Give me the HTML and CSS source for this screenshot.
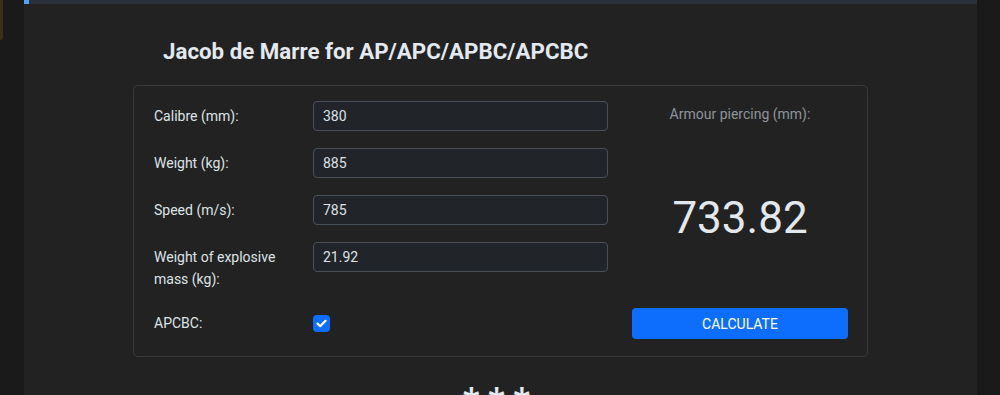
FILE: index.html
```html
<!DOCTYPE html>
<html lang="en">

<head>
	<meta charset="UTF-8">
	<title>Jacob de Marre</title>
	<link rel="stylesheet" href="styles.css">
</head>

<body>
	<div class="gutter gutter-left">
		<div class="tab"></div>
	</div>
	<div class="main">
		<div class="topbar"><span class="topbar-mark"></span></div>
		<h2 class="title">Jacob de Marre for AP/APC/APBC/APCBC</h2>
		<div class="card">
			<div class="form">
				<label class="label" for="calibre">Calibre (mm):</label>
				<input class="field" type="text" id="calibre" value="380">

				<label class="label" for="weight">Weight (kg):</label>
				<input class="field" type="text" id="weight" value="885">

				<label class="label" for="speed">Speed (m/s):</label>
				<input class="field" type="text" id="speed" value="785">

				<label class="label label-tall" for="explosive">Weight of explosive mass (kg):</label>
				<input class="field" type="text" id="explosive" value="21.92">

				<label class="label label-check" for="apcbc">APCBC:</label>
				<div class="check-cell">
					<span class="check">
						<svg width="11" height="9" viewBox="0 0 11 9">
							<path d="M1.5 4.6 L4.2 7.2 L9.5 1.8" fill="none" stroke="#fff" stroke-width="2.2" stroke-linecap="round" stroke-linejoin="round"/>
						</svg>
					</span>
				</div>
			</div>
			<div class="result">
				<div class="result-label">Armour piercing (mm):</div>
				<div class="result-value">733.82</div>
				<button type="button" class="calc">CALCULATE</button>
			</div>
		</div>
		<div class="stars">* * *</div>
	</div>
	<div class="gutter gutter-right"></div>
</body>

</html>
```

FILE: styles.css
```css
* {
    margin: 0;
    padding: 0;
    box-sizing: border-box;
    font-family: Roboto, "Liberation Sans", sans-serif;
}
body {
    display: flex;
    width: 1000px;
    height: 395px;
    overflow: hidden;
    background: #1a1a1a;
    color: #dee2e6;
}
.gutter-left {
    width: 24px;
    flex: none;
}
.gutter-right {
    width: 23px;
    flex: none;
}
.tab {
    width: 3px;
    height: 40px;
    background: #3a3117;
    border-bottom-right-radius: 3px;
}
.main {
    flex: 1;
    background: #222222;
    display: flex;
    flex-direction: column;
    align-items: center;
}
.topbar {
    width: 100%;
    height: 4px;
    background: #2b303b;
}
.topbar-mark {
    display: block;
    width: 5px;
    height: 4px;
    background: #4ea5f5;
}
.title {
    width: 735px;
    padding-left: 30px;
    margin-top: 35px;
    font-size: 22.3px;
    font-weight: 700;
    line-height: 25px;
    color: #e3e9ef;
}
.card {
    width: 735px;
    margin-top: 21px;
    border: 1px solid #3a3a3a;
    border-radius: 5px;
    padding: 15px 19px 17px 20px;
    display: flex;
    gap: 24px;
}
.form {
    width: 454px;
    display: grid;
    grid-template-columns: 159px 295px;
    row-gap: 17px;
    align-items: start;
}
.label {
    font-size: 14px;
    line-height: 22px;
    padding-top: 4px;
    color: #dee2e6;
}
.label-tall {
    padding-right: 16px;
}
.label-check {
    padding-top: 5px;
}
.field {
    height: 30px;
    background: #212529;
    border: 1px solid #495057;
    border-radius: 4px;
    padding: 0 9px;
    font-size: 14px;
    color: #dee2e6;
    outline: none;
}
.check-cell {
    height: 32px;
    display: flex;
    align-items: center;
}
.check {
    width: 17px;
    height: 17px;
    border-radius: 4px;
    background: #0d6efd;
    display: flex;
    align-items: center;
    justify-content: center;
}
.result {
    flex: 1;
    display: flex;
    flex-direction: column;
    justify-content: space-between;
    align-items: stretch;
    text-align: center;
}
.result-label {
    font-size: 14px;
    line-height: 26px;
    color: #8d949b;
}
.result-value {
    font-size: 44px;
    line-height: 52px;
    font-weight: 400;
    color: #e3e8ed;
}
.calc {
    height: 31px;
    border: 0;
    border-radius: 4px;
    background: #0d6efd;
    color: #fff;
    font-size: 14px;
    cursor: pointer;
}
.stars {
    margin-top: 26px;
    padding-right: 8px;
    font-size: 36px;
    font-weight: 700;
    line-height: 36px;
    color: #e3e9ef;
}
```
